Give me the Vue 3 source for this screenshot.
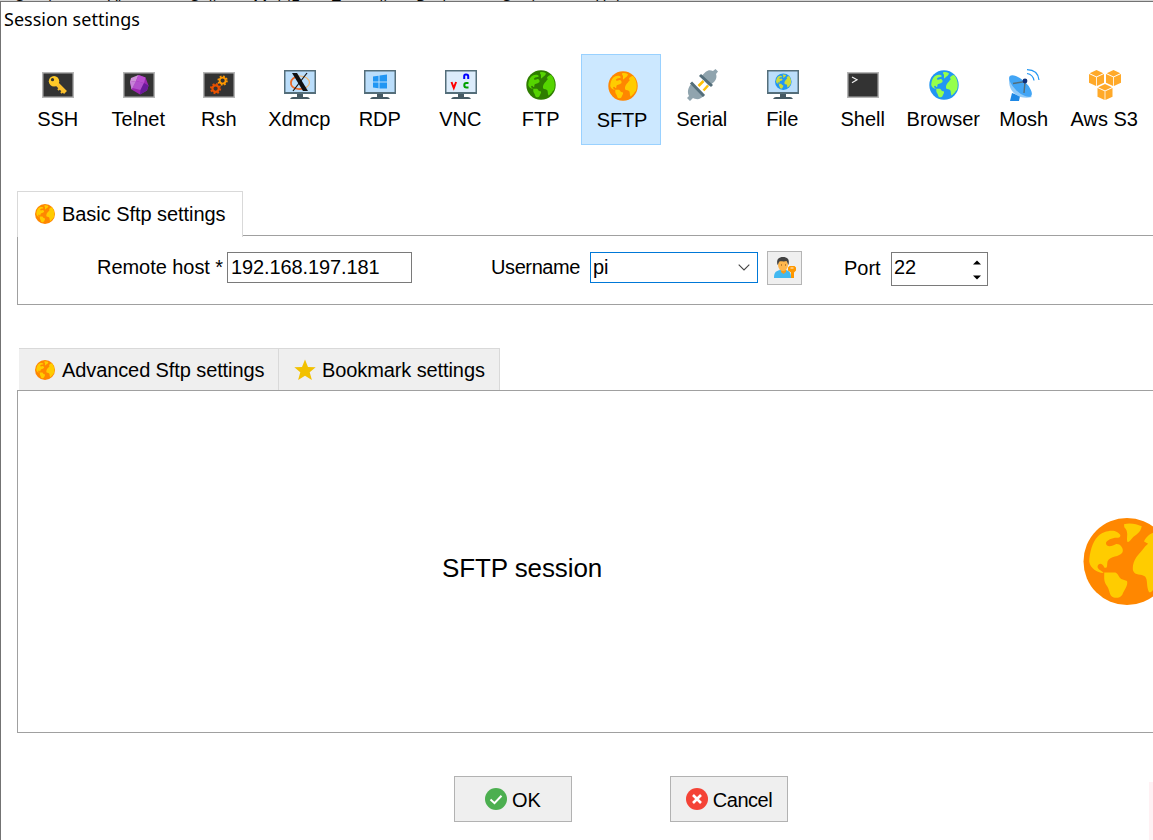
<script setup>
import { ref } from 'vue'

const menus = [
  { name: 'Sessions', w: 93 }, { name: 'View', w: 82 }, { name: 'Split', w: 63 },
  { name: 'MultiExec', w: 79 }, { name: 'Tunneling', w: 84 }, { name: 'Packages', w: 86 },
  { name: 'Settings', w: 93 }, { name: 'Help', w: 80 }
]
const types = ['SSH', 'Telnet', 'Rsh', 'Xdmcp', 'RDP', 'VNC', 'FTP', 'SFTP', 'Serial', 'File', 'Shell', 'Browser', 'Mosh', 'Aws S3']
const terminals = ['SSH', 'Telnet', 'Rsh', 'Shell']
const monitors = ['Xdmcp', 'RDP', 'VNC', 'File']
const active = ref('SFTP')
const host = ref('192.168.197.181')
const user = ref('pi')
const port = ref('22')
</script>

<template>
  <div class="screen">
    <svg class="defs" aria-hidden="true">
      <symbol id="land" viewBox="0 0 260 260">
        <path d="M17 130C18 105 26 72 42 56C58 40 86 34 100 42C112 49 114 56 103 59C90 57 69 65 67 75C68 89 86 85 98 78C113 77 121 95 116 103C108 117 79 113 72 129C69 140 74 151 62 148C57 134 44 134 42 145C42 154 51 155 60 164C43 165 20 151 17 130ZM62 163H95C104 166 105 178 113 182L130 188C134 202 121 216 116 229C107 242 92 240 84 234C76 226 78 211 68 200C60 190 62 175 62 163ZM121 19C136 13 158 17 174 25C170 48 155 49 146 60C141 66 136 74 131 71C127 58 137 43 122 28ZM218 42C203 42 185 58 181 70L193 77C180 87 176 98 165 108C153 120 145 141 148 157C154 174 173 166 184 175C193 185 187 205 196 222C206 224 210 207 222 201C232 192 233 179 244 174C253 155 255 116 245 87C239 70 231 54 218 42Z"/>
      </symbol>
    </svg>
    <div class="menu"><span v-for="m in menus" :key="m.name" :style="{ width: m.w + 'px' }">{{ m.name }}</span></div>
    <main class="dialog">
      <header class="title">Session settings</header>
      <nav class="types">
        <button v-for="t in types" :key="t" class="type" :class="{ active: t === active }" @click="active = t">
          <svg class="icon" viewBox="0 0 32 32">
            <g v-if="terminals.includes(t)">
              <rect width="32" height="26" y="3" fill="#b5b5b5"/><rect x="1.5" y="4.5" width="29" height="23" fill="#333"/>
            </g>
            <g v-if="monitors.includes(t)">
              <path d="M13 25h6v3h4q2 0 3 2H6q1-2 3-2h4z" fill="#455a64"/>
              <rect y="1" width="32" height="24" fill="#546e7a"/><rect x="1.5" y="2.5" width="29" height="20.5" :fill="t === 'VNC' ? '#dcecfb' : '#bbdefb'"/>
            </g>
            <g v-if="t === 'SSH'">
              <path d="M15 15l8.500 8.500" stroke="#fbc02d" stroke-width="4"/><path d="M18 19l-2 2M21 22l-2 2" stroke="#fbc02d" stroke-width="2"/>
              <circle cx="12" cy="12.300" r="5.200" fill="#ffca28"/><circle cx="10.500" cy="10.700" r="1.600" fill="#333"/>
            </g>
            <g v-else-if="t === 'Telnet'">
              <path d="M15.500 6l7 2.500 3 8-1.500 5L17 25.500 8.500 20.500 7 12z" fill="#9c27b0"/><path d="M15.500 6l-2.500 6-6 1 1-4z" fill="#ce93d8"/><path d="M15.500 6l7 2.500-1.500 5.500L13 12z" fill="#ba4fd0"/><path d="M13 12l8 2-3.500 7-8-2z" fill="#b250cc"/><path d="M7 13l6-1-3.500 7-1 1.500z" fill="#c682d8"/><path d="M21 14l4.500 2.500-1.500 5L17 25.500l.500-4.500z" fill="#6a1b9a"/>
            </g>
            <g v-else-if="t === 'Rsh'" fill="none">
              <circle cx="12.600" cy="19.600" r="4.600" stroke="#e65100" stroke-width="2" stroke-dasharray="1.810 1.803"/><circle cx="12.600" cy="19.600" r="3.200" stroke="#e65100" stroke-width="2.200"/>
              <circle cx="19.600" cy="11.600" r="4.300" stroke="#ff9800" stroke-width="1.800" stroke-dasharray="1.690 1.687"/><circle cx="19.600" cy="11.600" r="3" stroke="#ff9800" stroke-width="1.800"/>
            </g>
            <g v-else-if="t === 'Xdmcp'">
              <ellipse cx="16" cy="13.500" rx="9.500" ry="6.500" fill="none" stroke="#f5b56b" stroke-width="1.200"/><path d="M15 7.500c-10 1-11 11-1 12.500q4 .500 7-2" fill="none" stroke="#e8662a" stroke-width="1.700"/>
              <path d="M8 4h5l11 18h-5z" fill="#111"/><path d="M23 4L9 22" stroke="#111" stroke-width="1.200"/>
            </g>
            <path v-else-if="t === 'RDP'" d="M9 7.500l5.500-.8v5.800H9zM15.500 6.500L23 5.400v7.100h-7.500zM9 13.500h5.500v5.800L9 18.500zM15.500 13.500H23v6l-7.500-.1z" fill="#2196f3"/>
            <g v-else-if="t === 'VNC'" fill="none" stroke-width="2">
              <path d="M6.500 13l2.300 6 2.300-6" stroke="#f00"/><path d="M19.200 10V7.300q0-1.800 1.500-1.800h.5q2 0 2 1.800V10" stroke="#00f"/><path d="M23.500 14h-2.200q-2 0-2 2.300 0 2.200 2.200 2.200h2" stroke="#00a000"/>
            </g>
            <g v-else-if="t === 'FTP' || t === 'SFTP' || t === 'Browser'">
              <circle cx="16" cy="16" r="14.700" :fill="t === 'FTP' ? '#2e7d00' : t === 'SFTP' ? '#ff8700' : '#2196f3'"/><use href="#land" x="1.300" y="1.300" width="29.400" height="29.400" :fill="t === 'FTP' ? '#55d400' : t === 'SFTP' ? '#ffcc00' : '#96ff4b'"/>
            </g>
            <g v-else-if="t === 'Serial'">
              <path d="M12.500 17l5-5M17.500 21.500l4.500-5" stroke="#ffc107" stroke-width="2.500"/>
              <path d="M14.500 8l5-5c3-2.500 5-2 7.500-1L29.500 0 32 2.500 30 5c1 3 .500 5-2 8l-5 4zM5 15l13 12-3 2c-3 2-6 1-8 0l-3 3-3-3 2-2c-2-4-1-8 2-12z" fill="#90a4ae"/>
              <path d="M14 6l12 11M5 13.500L18 27" stroke="#546e7a" stroke-width="3"/>
            </g>
            <g v-else-if="t === 'File'">
              <circle cx="16.300" cy="12.700" r="8.300" fill="#2196f3"/><use href="#land" x="8" y="4.400" width="16.600" height="16.600" fill="#cddc39"/>
            </g>
            <path v-else-if="t === 'Shell'" d="M5 8l5 2.700-5 3" fill="none" stroke="#eee" stroke-width="1.200"/>
            <g v-else-if="t === 'Mosh'">
              <path d="M4 24l8 3-1 5H2z" fill="#1e88e5"/>
              <path d="M2 7C-2 19 8 32 24 28z" fill="#90caf9"/>
              <ellipse cx="12.500" cy="17" rx="14.500" ry="6" transform="rotate(43 12.500 17)" fill="#42a5f5"/>
              <path d="M5 14.500l12-2-1 11.500" fill="none" stroke="#546e7a" stroke-width="1.400"/><circle cx="17" cy="12" r="2.400" fill="#0d2f7b"/><path d="M19 4.500q6 1 7 7M19 .7Q30 1 31 11" fill="none" stroke="#2196f3" stroke-width="1.200"/>
            </g>
            <g v-else-if="t === 'Aws S3'" fill="#ffa929">
              <g v-for="(p, i) in [[0, .5], [17, .5], [8.5, 14.5]]" :key="i" :transform="`translate(${p[0]} ${p[1]})`">
                <path d="M.7 3.700L7.500.5 14.300 3.700 7.500 6.900zM0 4.500l7.100 3.300V16.500L0 13.200zM7.900 7.800l7.100-3.300v8.700L7.900 16.500z"/>
              </g>
            </g>
          </svg>
          <span>{{ t }}</span>
        </button>
      </nav>

      <section class="basic">
        <div class="basic-tabs">
          <div class="tab on">
            <svg class="small" viewBox="0 0 20 20"><circle cx="10" cy="10" r="10" fill="#ff8700"/><use href="#land" width="20" height="20" fill="#ffcc00"/></svg>Basic Sftp settings
          </div>
          <div class="rule"></div>
        </div>
        <div class="fields">
          <label class="host-label">Remote host *</label>
          <input v-model="host" class="host">
          <label class="user-label">Username</label>
          <div class="combo"><input v-model="user"><svg viewBox="0 0 12 7"><path d="M.7.7L6 6 11.300.7" fill="none" stroke="#444" stroke-width="1.100"/></svg></div>
          <button class="cred">
            <svg viewBox="0 0 24 24">
              <path d="M1 22c0-7 3-7 6-8h6c4 1 5 3 5 8z" fill="#42b8f0"/><path d="M8 12h5v4l-2.500 2L8 16z" fill="#f59b1c"/><ellipse cx="10" cy="9" rx="5" ry="6" fill="#ffb74d"/><path d="M4.500 9C3 3 6 1 10 1s7 2 5.500 8c-1-1-1-3-2-4-2 1-6 0-7 .500-1 1-1 2.500-2 3.500z" fill="#424242"/><path d="M8 9h1m3 0h1" stroke="#754a20"/>
              <path d="M16.500 10h5l1.500 1.500v3L21 16.500V22h-3v-5.500l-3-2v-3z" fill="#ff9800"/><path d="M17.500 12h3" stroke="#fff3d9"/>
            </svg>
          </button>
          <label class="port-label">Port</label>
          <div class="spin"><input v-model="port"><svg viewBox="0 0 8 20"><path d="M0 4.500L4 .500 8 4.500zM0 15.500l4 4 4-4z"/></svg></div>
        </div>
      </section>

      <section class="advanced">
        <div class="adv-tabs">
          <div class="tab first">
            <svg class="small" viewBox="0 0 20 20"><circle cx="10" cy="10" r="10" fill="#ff8700"/><use href="#land" width="20" height="20" fill="#ffcc00"/></svg>Advanced Sftp settings
          </div>
          <div class="tab second">
            <svg class="small star" viewBox="0 0 22 22"><path d="M11 .5l3 7.500 7.700.3-6 4.900 2.200 7.800L11 16.700 4.100 21l2.200-7.800-6-4.900L8 8z" fill="#f2c100"/></svg>Bookmark settings
          </div>
        </div>
        <div class="panel">
          <span class="kind">SFTP session</span>
          <svg class="globe" viewBox="0 0 88 88"><circle cx="44" cy="44" r="44" fill="#ff8700"/><use href="#land" width="88" height="88" fill="#ffcc00"/></svg>
        </div>
      </section>

      <footer>
        <button class="action"><svg viewBox="0 0 22 22"><circle cx="11" cy="11" r="11" fill="#4caf50"/><path d="M5.500 11.500l4 3.700 7-7.500" fill="none" stroke="#fff" stroke-width="2"/></svg><span>OK</span></button>
        <button class="action cancel"><svg viewBox="0 0 22 22"><circle cx="11" cy="11" r="11" fill="#f44336"/><path d="M7 7l8 8M15 7l-8 8" stroke="#fff" stroke-width="2.600"/></svg><span>Cancel</span></button>
      </footer>
      <i class="edge"></i>
    </main>
  </div>
</template>

<style>
body { margin: 0; overflow: hidden; }
</style>

<style scoped>
* { box-sizing: border-box; }
.screen { width: 1153px; height: 840px; overflow: hidden; background: #fff; font: 20px/24px "Liberation Sans", Arial, sans-serif; color: #000; }
button, input { font: inherit; color: inherit; padding: 0; letter-spacing: inherit; }
.defs { position: absolute; width: 0; height: 0; }
.menu { display: flex; height: 1px; padding-left: 15px; overflow: hidden; background: #d6d6d6; font: 16px/16px "Open Sans", sans-serif; }
.menu span { flex: none; margin-top: -2px; }
.dialog { position: relative; height: 839px; border: solid #737373; border-width: 1px 0 0 1px; overflow: hidden; }
.title { height: 52px; padding: 5px 0 0 3px; font: 18px/25px "Noto Sans", sans-serif; white-space: nowrap; }
.types { display: flex; height: 91px; padding-left: 16.5px; }
.type { flex: 0 0 80.5px; display: flex; flex-direction: column; align-items: center; padding-top: 15px; border: 0; background: none; white-space: nowrap; }
.type.active { background: #cce8ff; border: 1px solid #99d1ff; flex-basis: 80px; margin-right: .5px; }
.icon { display: block; width: 32px; height: 32px; flex: none; margin-left: 1px; }
.type span { margin-top: 6px; }
.active .icon { margin-left: 3px; }
.active span { padding-left: 2px; letter-spacing: -.2px; }
.basic { margin: 46px 0 0 16px; height: 114px; width: 1160px; }
.basic-tabs { display: flex; height: 46px; }
.tab { display: flex; align-items: center; white-space: nowrap; letter-spacing: -.1px; }
.tab.on { width: 226px; border: 1px solid #d9d9d9; border-bottom: 0; padding: 0 0 2px 17px; letter-spacing: -.05px; }
.rule { flex: 1; height: 45px; border-bottom: 1px solid #a0a0a0; }
.small { width: 20px; height: 20px; margin-right: 7px; flex: none; }
.tab.on .small { position: relative; top: 0; }
.fields { height: 68px; display: flex; align-items: flex-start; border: solid #a0a0a0; border-width: 0 0 1px 1px; padding: 15px 0 0 79px; }
.fields label { white-space: nowrap; flex: none; padding-top: 3px; }
.host-label { width: 130px; letter-spacing: -.05px; }
input { border: 0; outline: 0; background: none; display: block; min-width: 0; }
.host { width: 185px; height: 31px; border: 1px solid #7a7a7a; padding: 0 0 1px 3px; letter-spacing: -.1px; }
.user-label { width: 99px; margin-left: 79px; letter-spacing: -.4px; }
.combo { width: 168px; height: 31px; border: 1px solid #0078d7; display: flex; align-items: center; padding: 0 7px 0 2px; }
.combo input { flex: 1; margin-bottom: 2px; }
.combo svg { width: 12px; height: 7px; }
.cred { width: 35px; height: 34px; margin: -1px 0 0 9px; border: 1px solid #b5b5b5; background: #efefef; display: grid; place-items: center; }
.cred svg { width: 24px; height: 24px; }
.fields .port-label { width: 47px; margin-left: 42px; padding-top: 4px; }
.spin { width: 97px; height: 34px; border: 1px solid #7a7a7a; display: flex; padding: 0 6px 0 2px; align-items: center; }
.spin input { flex: 1; margin-bottom: 4px; }
.spin svg { width: 8px; height: 20px; margin-top: 1px; }
.advanced { width: 1160px; margin: 43px 0 0 16px; }
.adv-tabs { display: flex; height: 42px; padding-left: 2px; }
.adv-tabs .tab { background: #efefef; border: solid #d9d9d9; border-width: 1px 1px 0 0; }
.first { width: 260px; padding-left: 16px; }
.second { width: 221px; padding-left: 15px; }
.star { width: 22px; height: 22px; margin-right: 6px; }
.panel { height: 343px; display: flex; align-items: center; border: 1px solid #a0a0a0; }
.kind { width: 641px; margin-left: 424px; font-size: 26px; line-height: 32px; padding-top: 13px; letter-spacing: -.1px; }
.globe { width: 88px; height: 87px; flex: none; margin-bottom: 1px; }
footer { display: flex; gap: 98px; margin: 43px 0 0 453px; }
.action { width: 118px; height: 46px; border: 1px solid #b2b2b2; background: #efefef; display: flex; align-items: center; justify-content: center; gap: 5px; }
.action svg { width: 22px; height: 22px; }
.action span { padding-top: 2px; }
.cancel span { letter-spacing: -.5px; }
.edge { position: absolute; right: 0; bottom: 0; width: 4px; height: 58px; background: #fff1f4; }
</style>
